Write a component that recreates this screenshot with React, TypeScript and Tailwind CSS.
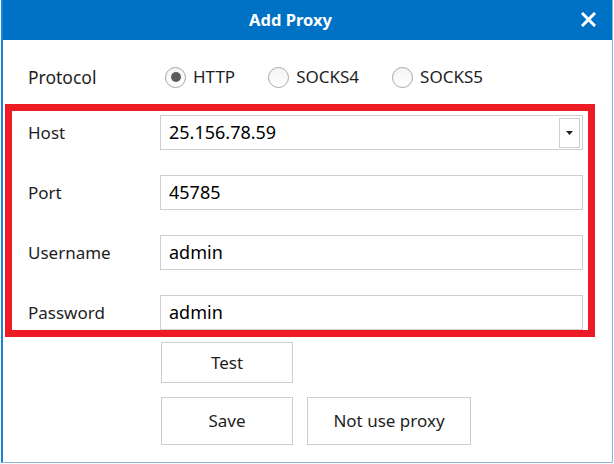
import React from "react";

const FONT = "font-['Noto_Sans',_'Open_Sans',_sans-serif]";

function Radio({ label, checked }: { label: string; checked?: boolean }) {
  return (
    <label className="flex items-center">
      <span className="flex h-[21px] w-[21px] items-center justify-center rounded-full border border-[#a6a6a6] bg-gradient-to-b from-[#f4f4f4] to-white">
        {checked && <span className="h-[10px] w-[10px] rounded-full bg-[#5b5b5b]" />}
      </span>
      <span className="ml-[7px] text-[17px] text-[#1e1e1e]">{label}</span>
    </label>
  );
}

function Row({ label, children }: { label: string; children: React.ReactNode }) {
  return (
    <div className="flex h-[35px] items-center">
      <span className="w-[132px] text-[17px] text-[#1e1e1e]">{label}</span>
      {children}
    </div>
  );
}

function TextBox({ value }: { value: string }) {
  return (
    <div className="flex h-full flex-1 items-center border-[1.5px] border-[#cfcfcf] pl-[8px] text-[18px] text-black">
      {value}
    </div>
  );
}

function Btn({ label, w }: { label: string; w: string }) {
  return (
    <button className={`${w} flex items-center justify-center border-[1.5px] border-[#cdcdcd] bg-white text-[17px] text-[#1e1e1e]`}>
      {label}
    </button>
  );
}

export default function App() {
  return (
    <div className={`h-[464px] w-[614px] bg-white ${FONT}`}>
      <div className="ml-[1px] flex h-[463px] w-[612px] flex-col border-b border-l-2 border-r border-b-[#8ab8e0] border-l-[#1b83d9] border-r-[#8ab8e0]">
        <div className="relative flex h-[40px] items-center justify-center bg-[#0072c6] pr-[34px]">
          <span className="text-[16.5px] font-bold text-white">Add Proxy</span>
          <svg className="absolute right-[16px] top-[12px]" width="15" height="15" viewBox="0 0 15 15">
            <path d="M2 2 L13 13 M13 2 L2 13" stroke="white" strokeWidth="3" strokeLinecap="square" />
          </svg>
        </div>

        <div className="mt-[25px] flex h-[24px] items-center pl-[25px]">
          <span className="w-[137px] text-[17.5px] text-[#1e1e1e]">Protocol</span>
          <div className="flex items-center gap-[33px]">
            <Radio label="HTTP" checked />
            <Radio label="SOCKS4" />
            <Radio label="SOCKS5" />
          </div>
        </div>

        <div className="ml-[2px] mt-[15px] flex w-[590px] flex-col gap-[25px] border-[7px] border-[#ed1c24] pb-0 pl-[16px] pr-[5px] pt-[4px]">
          <Row label="Host">
            <div className="flex h-full flex-1 items-center border-[1.5px] border-[#cfcfcf] pl-[8px] pr-[2px] text-[18px] text-black">
              <span className="flex-1">25.156.78.59</span>
              <span className="flex h-[30px] w-[21px] items-center justify-center border border-[#cfcfcf]">
                <svg width="7" height="4" viewBox="0 0 7 4">
                  <path d="M0 0 H7 L3.5 4 Z" fill="#222" />
                </svg>
              </span>
            </div>
          </Row>
          <Row label="Port">
            <TextBox value="45785" />
          </Row>
          <Row label="Username">
            <TextBox value="admin" />
          </Row>
          <Row label="Password">
            <TextBox value="admin" />
          </Row>
        </div>

        <div className="ml-[158px] mt-[5px] flex flex-col gap-[14px]">
          <Btn label="Test" w="h-[41px] w-[132px]" />
          <div className="flex gap-[14px]">
            <Btn label="Save" w="h-[48px] w-[132px]" />
            <Btn label="Not use proxy" w="h-[48px] w-[164px]" />
          </div>
        </div>
      </div>
    </div>
  );
}
